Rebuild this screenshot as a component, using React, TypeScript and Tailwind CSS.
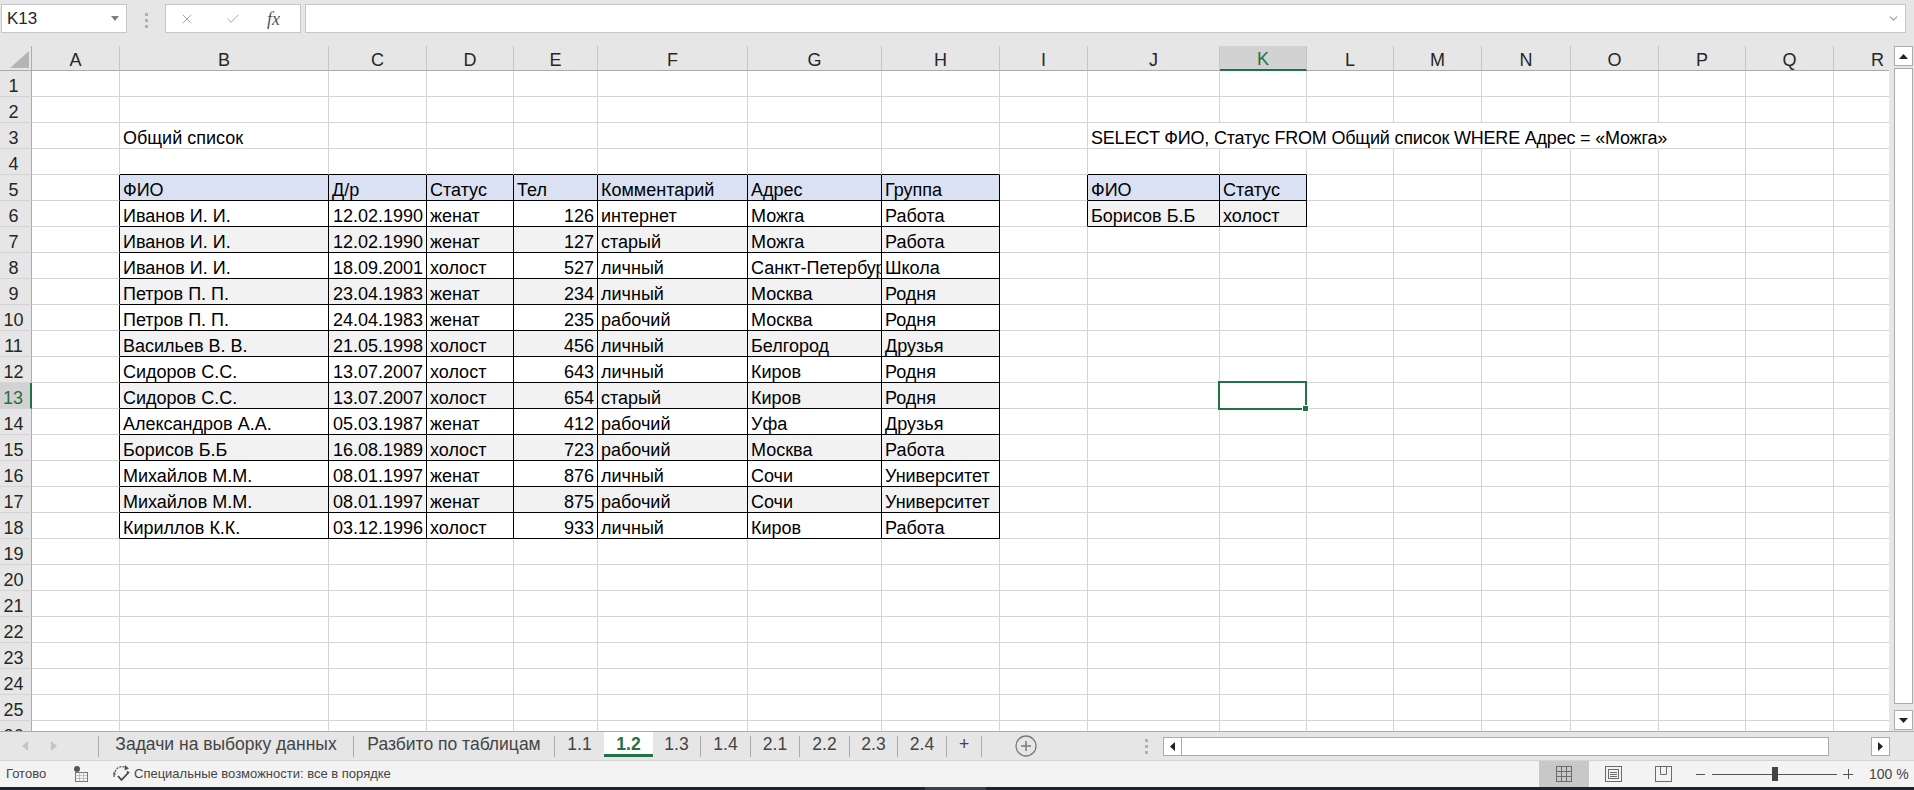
import { Check, ChevronDown, X } from "lucide-react";

const letters = ["A", "B", "C", "D", "E", "F", "G", "H", "I", "J", "K", "L", "M", "N", "O", "P", "Q", "R"];

const heads = ["ФИО", "Д/р", "Статус", "Тел", "Комментарий", "Адрес", "Группа"];

const people = [
  ["Иванов И. И.", "12.02.1990", "женат", "126", "интернет", "Можга", "Работа"],
  ["Иванов И. И.", "12.02.1990", "женат", "127", "старый", "Можга", "Работа"],
  ["Иванов И. И.", "18.09.2001", "холост", "527", "личный", "Санкт-Петербург", "Школа"],
  ["Петров П. П.", "23.04.1983", "женат", "234", "личный", "Москва", "Родня"],
  ["Петров П. П.", "24.04.1983", "женат", "235", "рабочий", "Москва", "Родня"],
  ["Васильев В. В.", "21.05.1998", "холост", "456", "личный", "Белгород", "Друзья"],
  ["Сидоров С.С.", "13.07.2007", "холост", "643", "личный", "Киров", "Родня"],
  ["Сидоров С.С.", "13.07.2007", "холост", "654", "старый", "Киров", "Родня"],
  ["Александров А.А.", "05.03.1987", "женат", "412", "рабочий", "Уфа", "Друзья"],
  ["Борисов Б.Б", "16.08.1989", "холост", "723", "рабочий", "Москва", "Работа"],
  ["Михайлов М.М.", "08.01.1997", "женат", "876", "личный", "Сочи", "Университет"],
  ["Михайлов М.М.", "08.01.1997", "женат", "875", "рабочий", "Сочи", "Университет"],
  ["Кириллов К.К.", "03.12.1996", "холост", "933", "личный", "Киров", "Работа"],
];

type Cell = { t: string; right?: boolean; spill?: boolean; tight?: boolean };

const data: Record<string, Cell> = {};
data["3-2"] = { t: "Общий список", spill: true };
data["3-10"] = { t: "SELECT ФИО, Статус FROM Общий список WHERE Адрес = «Можга»", spill: true, tight: true };
heads.forEach((h, i) => (data[`5-${i + 2}`] = { t: h }));
people.forEach((row, ri) =>
  row.forEach((v, ci) => (data[`${ri + 6}-${ci + 2}`] = { t: v, right: ci === 1 || ci === 3 }))
);
data["5-10"] = { t: "ФИО" };
data["5-11"] = { t: "Статус" };
data["6-10"] = { t: "Борисов Б.Б" };
data["6-11"] = { t: "холост" };

const inMain = (r: number, c: number) => r >= 5 && r <= 18 && c >= 2 && c <= 8;
const inSecond = (r: number, c: number) => r >= 5 && r <= 6 && c >= 10 && c <= 11;
const inTable = (r: number, c: number) => inMain(r, c) || inSecond(r, c);

const tabs = [
  { t: "Задачи на выборку данных", w: "w-[254px]", sep: true },
  { t: "Разбито по таблицам", w: "w-[200px]", sep: true },
  { t: "1.1", w: "w-[49px]", sep: false },
  { t: "1.2", w: "w-[49px]", sep: false, active: true },
  { t: "1.3", w: "w-[47px]", sep: true },
  { t: "1.4", w: "w-[49px]", sep: true },
  { t: "2.1", w: "w-[48px]", sep: true },
  { t: "2.2", w: "w-[49px]", sep: true },
  { t: "2.3", w: "w-[47px]", sep: true },
  { t: "2.4", w: "w-[48px]", sep: true },
  { t: "+", w: "w-[34px]", sep: true },
];

function Sheet() {
  const cells = [];
  cells.push(
    <div key="corner" className="flex items-end justify-end border-r border-b border-[#ababab] bg-[#e6e6e6] p-[2px]">
      <svg width="19" height="17">
        <polygon points="19,0 19,17 0,17" fill="#b4b4b4" />
      </svg>
    </div>
  );
  letters.forEach((l) => {
    const sel = l === "K";
    cells.push(
      <div
        key={l}
        className={
          sel
            ? "flex items-end justify-center leading-[20px] text-[18px] bg-[#d2d2d2] text-[#217346] border-r border-r-[#c6c6c6] border-b-2 border-b-[#217346]"
            : "flex items-end justify-center leading-[20px] text-[18px] bg-[#e6e6e6] text-[#262626] border-r border-r-[#c6c6c6] border-b border-b-[#ababab]"
        }
      >
        {l}
      </div>
    );
  });

  for (let r = 1; r <= 26; r++) {
    const selRow = r === 13;
    cells.push(
      <div
        key={`h${r}`}
        className={
          selRow
            ? "flex items-end justify-center pr-[4px] leading-[20px] text-[18px] bg-[#d2d2d2] text-[#217346] border-r-2 border-r-[#217346] border-b border-b-[#d4d4d4]"
            : "flex items-end justify-center pr-[4px] leading-[20px] text-[18px] bg-[#e6e6e6] text-[#262626] border-r border-r-[#ababab] border-b border-b-[#d4d4d4]"
        }
      >
        {r}
      </div>
    );
    for (let c = 1; c <= 18; c++) {
      const cell = data[`${r}-${c}`];
      const spillOver = r === 3 && c >= 10 && c <= 15;
      const rightCls = inTable(r, c) || inTable(r, c + 1)
        ? "border-r-black"
        : spillOver
        ? "border-r-transparent"
        : "border-r-[#d4d4d4]";
      const bottomCls = inTable(r, c) || inTable(r + 1, c) ? "border-b-black" : "border-b-[#d4d4d4]";
      let bg = "";
      if (inTable(r, c) && r === 5) bg = "bg-[#d9e1f2]";
      else if (inMain(r, c) && r % 2 === 1) bg = "bg-[#f2f2f2]";
      else if (inSecond(r, c) && r === 6) bg = "bg-[#f2f2f2]";
      const isSel = r === 13 && c === 11;
      cells.push(
        <div
          key={`${r}-${c}`}
          className={`flex items-end px-[3px] leading-[20px] text-[18px] whitespace-nowrap border-r border-b ${rightCls} ${bottomCls} ${bg} ${
            cell?.spill || isSel ? "overflow-visible" : "overflow-hidden"
          } ${cell?.right ? "justify-end" : ""} ${cell?.tight ? "tracking-[-0.2px]" : ""} ${isSel ? "relative" : ""}`}
        >
          {cell?.t}
          {isSel && (
            <div className="absolute -left-[2px] -top-[2px] w-[89px] h-[29px] border-2 border-[#217346]">
              <div className="absolute -right-[4px] -bottom-[4px] w-[7px] h-[7px] bg-[#217346] border border-white" />
            </div>
          )}
        </div>
      );
    }
  }

  return (
    <div className="flex-1 overflow-hidden bg-white">
      <div className="grid w-[1922px] grid-cols-[32px_88px_209px_98px_87px_84px_150px_134px_118px_88px_132px_87px_87px_88px_89px_88px_87px_88px_88px] grid-rows-[25px_repeat(26,26px)]">
        {cells}
      </div>
    </div>
  );
}

function Dots() {
  return (
    <svg width="3" height="15">
      <rect x="0" y="0" width="3" height="3" fill="#b0b0b0" />
      <rect x="0" y="6" width="3" height="3" fill="#b0b0b0" />
      <rect x="0" y="12" width="3" height="3" fill="#b0b0b0" />
    </svg>
  );
}

export default function App() {
  return (
    <div className="w-[1914px] h-[790px] overflow-hidden flex flex-col bg-[#e6e6e6] font-['Liberation_Sans',Arial,sans-serif] text-black select-none">
      {/* name box + formula bar */}
      <div className="h-[46px] shrink-0 flex items-start pt-[4px]">
        <div className="ml-[1px] w-[126px] h-[29px] bg-white border border-[#c6c6c6] flex items-center pl-[5px] pr-[7px] text-[17px] text-[#262626]">
          <span className="flex-1">K13</span>
          <svg width="8" height="5">
            <polygon points="0,0 8,0 4,5" fill="#808080" />
          </svg>
        </div>
        <div className="ml-[18px] mt-[9px]">
          <Dots />
        </div>
        <div className="ml-[17px] w-[136px] h-[29px] bg-white border border-[#c6c6c6] flex items-center pl-[13px]">
          <X size={16} strokeWidth={1.5} className="text-[#a6a6a6]" />
          <Check size={16} strokeWidth={1.5} className="ml-[30px] text-[#a6a6a6]" />
          <span className="ml-[26px] font-['Liberation_Serif',serif] italic text-[18px] text-[#555] leading-none">fx</span>
        </div>
        <div className="ml-[4px] w-[1601px] h-[29px] bg-white border border-[#c6c6c6] flex items-center justify-end pr-[5px]">
          <ChevronDown size={13} strokeWidth={2} className="text-[#9a9a9a]" />
        </div>
      </div>

      {/* grid + vertical scrollbar */}
      <div className="h-[685px] shrink-0 flex">
        <Sheet />
        <div className="w-[25px] flex flex-col pl-[5px] pr-[1px] pb-[1px] bg-[#e6e6e6]">
          <div className="h-[20px] bg-white border border-[#ababab] flex items-center justify-center">
            <svg width="9" height="5">
              <polygon points="0,5 9,5 4.5,0" fill="#222" />
            </svg>
          </div>
          <div className="mt-[2px] h-[636px] bg-white border border-[#ababab]" />
          <div className="mt-auto h-[20px] bg-white border border-[#ababab] flex items-center justify-center">
            <svg width="9" height="5">
              <polygon points="0,0 9,0 4.5,5" fill="#222" />
            </svg>
          </div>
        </div>
      </div>

      {/* sheet tabs */}
      <div className="h-[29px] shrink-0 flex items-stretch border-t border-[#ababab] bg-[#e6e6e6] text-[17.5px] text-[#444]">
        <div className="w-[98px] flex items-center">
          <svg className="ml-[22px]" width="6" height="10">
            <polygon points="6,0 0,5 6,10" fill="#c4c4c4" />
          </svg>
          <svg className="ml-[23px]" width="6" height="10">
            <polygon points="0,0 6,5 0,10" fill="#c4c4c4" />
          </svg>
        </div>
        <div className="w-px h-[21px] self-center bg-[#ababab]" />
        {tabs.map((tab) =>
          tab.active ? (
            <div
              key={tab.t}
              className={`${tab.w} h-[25px] bg-white border-b-[3px] border-[#217346] flex items-center justify-center pt-[2px] font-bold text-[#217346]`}
            >
              {tab.t}
            </div>
          ) : (
            <div key={tab.t} className="flex items-stretch">
              <div className={`${tab.w} flex items-center justify-center pb-[3px]`}>{tab.t}</div>
              {tab.sep && <div className="w-px h-[21px] self-center bg-[#ababab]" />}
            </div>
          )
        )}
        <div className="ml-[33px] flex items-center pb-[1px]">
          <svg width="22" height="22">
            <circle cx="11" cy="11" r="10" fill="none" stroke="#7a7a7a" strokeWidth="1.3" />
            <line x1="6" y1="11" x2="16" y2="11" stroke="#7a7a7a" strokeWidth="1.5" />
            <line x1="11" y1="6" x2="11" y2="16" stroke="#7a7a7a" strokeWidth="1.5" />
          </svg>
        </div>
        <div className="ml-[108px] flex items-center">
          <Dots />
        </div>
        <div className="ml-[15px] w-[727px] h-[19px] self-center flex">
          <div className="w-[19px] bg-white border border-[#ababab] flex items-center justify-center">
            <svg width="5" height="9">
              <polygon points="5,0 0,4.5 5,9" fill="#222" />
            </svg>
          </div>
          <div className="flex-1 bg-white border border-l-0 border-[#ababab]" />
          <div className="w-[42px]" />
          <div className="w-[19px] bg-white border border-[#ababab] flex items-center justify-center">
            <svg width="5" height="9">
              <polygon points="0,0 5,4.5 0,9" fill="#222" />
            </svg>
          </div>
        </div>
      </div>

      {/* status bar */}
      <div className="h-[27px] shrink-0 flex items-stretch bg-[#f3f3f3] border-t border-[#d4d4d4] text-[13px] text-[#444]">
        <div className="w-[73px] pl-[6px] flex items-center">Готово</div>
        <div className="flex items-center">
          <svg width="16" height="16">
            <circle cx="4" cy="3" r="3" fill="#555" />
            <rect x="2.5" y="6.5" width="12" height="9" fill="none" stroke="#777" />
            <line x1="2.5" y1="9.5" x2="14.5" y2="9.5" stroke="#999" strokeDasharray="1 1" />
            <line x1="2.5" y1="12.5" x2="14.5" y2="12.5" stroke="#999" strokeDasharray="1 1" />
            <line x1="6.5" y1="6.5" x2="6.5" y2="15.5" stroke="#999" strokeDasharray="1 1" />
            <line x1="10.5" y1="6.5" x2="10.5" y2="15.5" stroke="#999" strokeDasharray="1 1" />
          </svg>
        </div>
        <div className="ml-[23px] flex items-center">
          <svg width="20" height="18" viewBox="0 0 20 18">
            <path d="M3 10 A7 7 0 0 1 14 3" fill="none" stroke="#555" strokeWidth="1.3" strokeDasharray="2 1.2" />
            <polygon points="13,0 17,3.5 12.5,5.5" fill="#555" />
            <path d="M15.5 8 L15.5 6" stroke="#555" strokeWidth="1.3" />
            <path d="M2 7 L2 12" stroke="#555" strokeWidth="1.3" />
            <path d="M6 11 L9.5 15 L17 7" fill="none" stroke="#444" strokeWidth="1.8" />
          </svg>
        </div>
        <div className="ml-[2px] flex items-center">Специальные возможности: все в порядке</div>
        <div className="flex-1" />
        <div className="w-[375px] flex items-stretch">
          <div className="w-[50px] bg-[#c8c8c8] flex items-center justify-center">
            <svg width="16" height="16">
              <rect x="0.5" y="0.5" width="15" height="15" fill="none" stroke="#6b6b6b" />
              <line x1="5.5" y1="0.5" x2="5.5" y2="15.5" stroke="#6b6b6b" />
              <line x1="10.5" y1="0.5" x2="10.5" y2="15.5" stroke="#6b6b6b" />
              <line x1="0.5" y1="5.5" x2="15.5" y2="5.5" stroke="#6b6b6b" />
              <line x1="0.5" y1="10.5" x2="15.5" y2="10.5" stroke="#6b6b6b" />
            </svg>
          </div>
          <div className="ml-[16px] flex items-center">
            <svg width="17" height="16">
              <rect x="0.5" y="0.5" width="16" height="15" fill="none" stroke="#6b6b6b" />
              <rect x="3.5" y="3.5" width="10" height="9" fill="none" stroke="#6b6b6b" />
              <line x1="5" y1="6.5" x2="12" y2="6.5" stroke="#6b6b6b" />
              <line x1="5" y1="8.5" x2="12" y2="8.5" stroke="#6b6b6b" />
              <line x1="5" y1="10.5" x2="12" y2="10.5" stroke="#6b6b6b" />
            </svg>
          </div>
          <div className="ml-[33px] flex items-center">
            <svg width="17" height="16">
              <rect x="0.5" y="0.5" width="16" height="15" fill="none" stroke="#6b6b6b" />
              <line x1="5.5" y1="0.5" x2="5.5" y2="8.5" stroke="#6b6b6b" />
              <line x1="11.5" y1="0.5" x2="11.5" y2="8.5" stroke="#6b6b6b" />
              <line x1="5.5" y1="8.5" x2="11.5" y2="8.5" stroke="#6b6b6b" />
            </svg>
          </div>
          <div className="ml-[24px] flex items-center">
            <div className="w-[9px] h-px bg-[#555]" />
          </div>
          <div className="ml-[7px] w-[125px] relative flex items-center">
            <div className="w-full h-px bg-[#555]" />
            <div className="absolute left-[60px] top-[6px] w-[6px] h-[14px] bg-[#444]" />
          </div>
          <div className="ml-[6px] w-[10px] relative flex items-center justify-center">
            <div className="w-[10px] h-px bg-[#555]" />
            <div className="absolute left-[4.5px] top-[8px] w-px h-[10px] bg-[#555]" />
          </div>
          <div className="ml-[16px] flex items-center whitespace-nowrap text-[14px]">100 %</div>
        </div>
      </div>
      <div className="h-[3px] shrink-0 flex bg-[#1c2430]">
        <div className="ml-[925px] w-[61px] bg-[#3a404a]" />
      </div>
    </div>
  );
}
